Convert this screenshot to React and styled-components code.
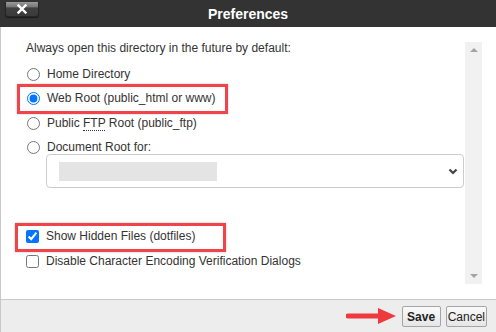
import React from 'react'
import styled, { createGlobalStyle } from 'styled-components'

const GlobalStyle = createGlobalStyle`
  html, body {
    margin: 0;
    padding: 0;
    background: #fff;
  }
  body {
    font-family: 'Liberation Sans', Arial, sans-serif;
  }
`

const Dialog = styled.div`
  width: 496px;
  height: 332px;
  display: flex;
  flex-direction: column;
  overflow: hidden;
`

const Header = styled.div`
  height: 27px;
  flex: none;
  background: #333;
  display: grid;
  grid-template-columns: 1fr auto 1fr;
  align-items: center;
`

const CloseButton = styled.button`
  justify-self: start;
  align-self: start;
  margin: 2px 0 0 5px;
  width: 34px;
  height: 15px;
  padding: 0;
  border: 1px solid #262626;
  border-top: none;
  border-radius: 0 0 3px 3px;
  background: linear-gradient(#9a9a9a 0%, #777 35%, #414141 42%, #3a3a3a 100%);
  box-shadow: 0 1px 1px rgba(0, 0, 0, 0.5);
  display: flex;
  align-items: center;
  justify-content: center;
`

const Title = styled.div`
  color: #fff;
  font: bold 14px 'Liberation Sans', Arial, sans-serif;
  padding-top: 1px;
`

const Body = styled.div`
  flex: 1;
  display: flex;
  border-left: 1px solid #c8c8c8;
  min-height: 0;
`

const Content = styled.div`
  flex: 1;
  padding: 14px 0 0 25px;
  color: #333;
  font-size: 12px;
`

const Intro = styled.div`
  line-height: 15px;
  margin-bottom: 6px;
`

const Row = styled.label`
  position: relative;
  display: flex;
  align-items: center;
  gap: 7px;
  height: 24.5px;
  line-height: 15px;
  white-space: nowrap;

  ${p => p.$mark && `
    &::before {
      content: '';
      position: absolute;
      left: ${p.$mark.left}px;
      top: ${p.$mark.top}px;
      width: ${p.$mark.width}px;
      height: ${p.$mark.height}px;
      box-sizing: border-box;
      border: 3px solid #f0444a;
      box-shadow: 0 0 2px rgba(0, 0, 0, 0.25);
      pointer-events: none;
    }
  `}
`

const Radio = styled.input.attrs({ type: 'radio' })`
  width: 13px;
  height: 13px;
  margin: 0 0 0 1px;
  accent-color: #0075ff;
`

const Check = styled.input.attrs({ type: 'checkbox' })`
  width: 13px;
  height: 13px;
  margin: 0;
  accent-color: #0075ff;
`

const Abbr = styled.abbr`
  text-decoration: none;
  border-bottom: 1px dotted #333;
  line-height: 12px;
`

const Select = styled.div`
  margin: -6px 0 0 20px;
  width: 418px;
  height: 34px;
  box-sizing: border-box;
  border: 1px solid #ccc;
  border-radius: 4px;
  display: flex;
  align-items: center;
  justify-content: space-between;
  padding: 0 5px 0 12px;
`

const Placeholder = styled.div`
  width: 158px;
  height: 19px;
  background: #e4e4e4;
`

const Options = styled.div`
  margin-top: 36.5px;
`

const Scrollbar = styled.div`
  width: 17px;
  margin: 15px 14px 15px 0;
  background: #f1f1f1;
  display: flex;
  flex-direction: column;
  justify-content: space-between;
  align-items: center;
  padding: 6px 0;
  box-sizing: border-box;
`

const Arrow = styled.div`
  width: 0;
  height: 0;
  border-left: 4px solid transparent;
  border-right: 4px solid transparent;
  ${p => p.$down ? 'border-top: 4px solid #a3a3a3;' : 'border-bottom: 4px solid #a3a3a3;'}
`

const Footer = styled.div`
  height: 33px;
  flex: none;
  box-sizing: border-box;
  background: #ededed;
  border-top: 1px solid #c8c8c8;
  border-left: 1px solid #c8c8c8;
  display: flex;
  align-items: center;
  justify-content: flex-end;
  gap: 5px;
  padding: 0 9px 0 0;
`

const Button = styled.button`
  height: 21px;
  padding: 0 ${p => (p.$primary ? 4.5 : 1)}px;
  margin-top: 1px;
  border: 1px solid #a5a5a5;
  border-radius: 2px;
  background: linear-gradient(#fafafa, #e6e6e6);
  color: #222;
  font: ${p => (p.$primary ? 'bold' : 'normal')} 12px 'Liberation Sans', Arial, sans-serif;
`

export default function App() {
  return (
    <Dialog>
      <GlobalStyle />
      <Header>
        <CloseButton aria-label="Close">
          <svg width="10" height="10" viewBox="0 0 10 10">
            <path d="M1.5 1.5L8.5 8.5M8.5 1.5L1.5 8.5" stroke="#fff" strokeWidth="2.4" strokeLinecap="square" />
          </svg>
        </CloseButton>
        <Title>Preferences</Title>
        <div />
      </Header>
      <Body>
        <Content>
          <Intro>Always open this directory in the future by default:</Intro>
          <Row>
            <Radio name="dir" />
            Home Directory
          </Row>
          <Row $mark={{ left: -9, top: -2.5, width: 211, height: 30 }}>
            <Radio name="dir" defaultChecked />
            Web Root (public_html or www)
          </Row>
          <Row>
            <Radio name="dir" />
            <span>Public <Abbr title="File Transfer Protocol">FTP</Abbr> Root (public_ftp)</span>
          </Row>
          <Row>
            <Radio name="dir" />
            Document Root for:
          </Row>
          <Select>
            <Placeholder />
            <svg width="10" height="7" viewBox="0 0 10 7">
              <path d="M1.5 1.5L5 5L8.5 1.5" fill="none" stroke="#444" strokeWidth="2.2" />
            </svg>
          </Select>
          <Options>
            <Row $mark={{ left: -11, top: -1.5, width: 211, height: 29 }}>
              <Check defaultChecked />
              Show Hidden Files (dotfiles)
            </Row>
            <Row>
              <Check />
              Disable Character Encoding Verification Dialogs
            </Row>
          </Options>
        </Content>
        <Scrollbar>
          <Arrow />
          <Arrow $down />
        </Scrollbar>
      </Body>
      <Footer>
        <svg width="51" height="18" viewBox="0 0 51 18">
          <path d="M2 9H36" stroke="#ee3a3f" strokeWidth="5" strokeLinecap="round" />
          <path d="M32 1L50 9L32 17Z" fill="#ee3a3f" />
        </svg>
        <Button $primary>Save</Button>
        <Button>Cancel</Button>
      </Footer>
    </Dialog>
  )
}
